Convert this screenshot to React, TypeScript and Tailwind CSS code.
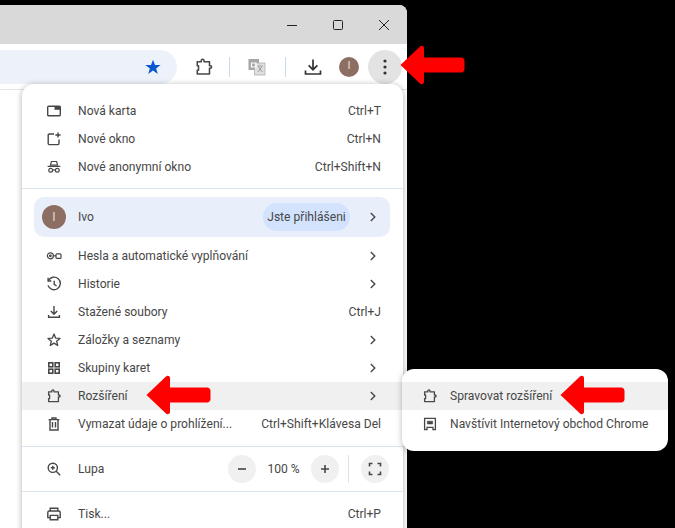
import React from "react";

const c = "#474747";

function Ext({ size = 16, color = c, sw = 1.3 }: { size?: number; color?: string; sw?: number }) {
  return (
    <svg width={size} height={size} viewBox="0 0 16 16" fill="none" stroke={color} strokeWidth={sw} strokeLinejoin="round">
      <path d="M2.6 3.8H5.8V2.9C5.8 2.3 6.3 1.8 6.9 1.8C7.5 1.8 8 2.3 8 2.9V3.8H12.4V7H13.1C13.7 7 14.1 7.5 14.1 8C14.1 8.5 13.7 9 13.1 9H12.4V13.6H2.6V10.6H3.6V7H2.6Z" />
    </svg>
  );
}

const Icons: Record<string, React.ReactNode> = {
  tab: (
    <svg width="16" height="16" viewBox="0 0 16 16" fill="none">
      <rect x="1.7" y="3.2" width="12.6" height="9.6" rx="1" stroke={c} strokeWidth="1.4" />
      <rect x="8.5" y="3.2" width="5.8" height="3.6" fill={c} />
    </svg>
  ),
  win: (
    <svg width="16" height="16" viewBox="0 0 16 16" fill="none" stroke={c} strokeWidth="1.4">
      <path d="M8 3H3.2C2.6 3 2.2 3.4 2.2 4V12.6C2.2 13.2 2.6 13.6 3.2 13.6H12C12.6 13.6 13 13.2 13 12.6V8.5" />
      <path d="M12 1.4V6.6M9.4 4H14.6" />
    </svg>
  ),
  incog: (
    <svg width="16" height="16" viewBox="0 0 16 16" fill="none" stroke={c} strokeWidth="1.2">
      <path d="M5.4 2.5H10.6L11.6 6.2H4.4Z" />
      <path d="M1.6 7.4H14.4" />
      <circle cx="4.7" cy="11.3" r="1.9" />
      <circle cx="11.3" cy="11.3" r="1.9" />
      <path d="M6.6 11H9.4" />
    </svg>
  ),
  key: (
    <svg width="16" height="16" viewBox="0 0 16 16" fill="none" stroke={c} strokeWidth="1.2">
      <circle cx="4.4" cy="7.8" r="3" />
      <circle cx="4.4" cy="7.8" r="0.8" fill={c} />
      <path d="M7.4 7.8H10" />
      <rect x="10" y="5.8" width="5" height="4.6" rx="1" />
    </svg>
  ),
  hist: (
    <svg width="16" height="16" viewBox="0 0 16 16" fill="none" stroke={c} strokeWidth="1.4">
      <path d="M2.4 4.6A6.3 6.3 0 1 1 2 9.4" />
      <path d="M2.1 1.8V5H5.3" />
      <path d="M8.2 4.8V8.4L10.6 10" />
    </svg>
  ),
  dl: (
    <svg width="16" height="16" viewBox="0 0 16 16" fill="none" stroke={c} strokeWidth="1.4">
      <path d="M8 2V10M4.8 7L8 10.2L11.2 7" />
      <path d="M2.6 11V13.2H13.4V11" />
    </svg>
  ),
  star: (
    <svg width="16" height="16" viewBox="0 0 16 16" fill="none" stroke={c} strokeWidth="1.3" strokeLinejoin="round">
      <path d="M8 2L9.6 6.1L14 6.4L10.6 9.2L11.7 13.5L8 11.1L4.3 13.5L5.4 9.2L2 6.4L6.4 6.1Z" />
    </svg>
  ),
  grid: (
    <svg width="16" height="16" viewBox="0 0 16 16" fill="none" stroke={c} strokeWidth="1.6">
      <rect x="2.8" y="2.8" width="4" height="4" />
      <rect x="9.2" y="2.8" width="4" height="4" />
      <rect x="2.8" y="9.2" width="4" height="4" />
      <rect x="9.2" y="9.2" width="4" height="4" />
    </svg>
  ),
  ext: <Ext />,
  trash: (
    <svg width="16" height="16" viewBox="0 0 16 16" fill="none" stroke={c} strokeWidth="1.4">
      <path d="M2.6 3.6H13.4M6 3.4V2H10V3.4" />
      <path d="M4 3.6V14H12V3.6" />
      <path d="M6.5 6V11.6M9.5 6V11.6" />
    </svg>
  ),
  zoom: (
    <svg width="16" height="16" viewBox="0 0 16 16" fill="none" stroke={c} strokeWidth="1.4">
      <circle cx="6.8" cy="6.8" r="4.6" />
      <path d="M10.2 10.2L14.2 14.2M6.8 4.8V8.8M4.8 6.8H8.8" />
    </svg>
  ),
  print: (
    <svg width="16" height="16" viewBox="0 0 16 16" fill="none" stroke={c} strokeWidth="1.4">
      <path d="M4.2 5V2.2H11.8V5" />
      <path d="M4.2 11.6H1.8V6.6C1.8 5.6 2.4 5 3.4 5H12.6C13.6 5 14.2 5.6 14.2 6.6V11.6H11.8" />
      <path d="M4.2 9.4H11.8V13.8H4.2Z" />
    </svg>
  ),
  store: (
    <svg width="16" height="16" viewBox="0 0 16 16" fill="none" stroke={c} strokeWidth="1.3">
      <path d="M2.6 2.4H13.4V13.6H11V11.4H5V13.6H2.6Z" />
      <path d="M5.4 5.2H10.6V8H5.4Z" fill={c} strokeWidth="0.6" />
    </svg>
  ),
};

function Chevron() {
  return (
    <svg width="16" height="16" viewBox="0 0 16 16" fill="none" stroke={c} strokeWidth="1.4">
      <path d="M5.8 4L9.8 8L5.8 12" />
    </svg>
  );
}

function Arrow({ className }: { className: string }) {
  return (
    <svg className={className} width="65" height="40" viewBox="0 0 65 40" fill="#ff0000">
      <path d="M0.5 20L20 1.5C21.5 0 24 1 24 3V12.5H61C63 12.5 64.5 14 64.5 16V24C64.5 26 63 27.5 61 27.5H24V37C24 39 21.5 40 20 38.5Z" />
    </svg>
  );
}

function Row({ icon, label, right, chevron, hover }: { icon: string; label: string; right?: string; chevron?: boolean; hover?: boolean }) {
  return (
    <div className={`flex h-7 items-center pl-6 pr-[22px] ${hover ? "bg-[#f0f0f0]" : ""}`}>
      <span className="flex w-8 shrink-0">{Icons[icon]}</span>
      <span className="flex-1 whitespace-nowrap">{label}</span>
      {right && <span className="whitespace-nowrap">{right}</span>}
      {chevron && <Chevron />}
    </div>
  );
}

function Sep({ className }: { className: string }) {
  return <div className={`h-px bg-[#dbe4ee] ${className}`} />;
}

export default function App() {
  return (
    <div className="relative h-[528px] w-[675px] overflow-hidden bg-black text-[12.1px] text-[#474747] [font-family:Roboto,sans-serif]">
      <div className="absolute left-0 top-[5px] flex h-[523px] w-[407px] flex-col overflow-hidden rounded-tr-lg bg-white">
        <div className="flex h-[39px] shrink-0 justify-end bg-[#d9d9d9] text-[#222]">
          <div className="flex w-[46px] items-center justify-center">
            <svg width="12" height="12" viewBox="0 0 12 12" stroke="#222" strokeWidth="1"><path d="M1 6.5H11" /></svg>
          </div>
          <div className="flex w-[46px] items-center justify-center">
            <svg width="12" height="12" viewBox="0 0 12 12" fill="none" stroke="#222" strokeWidth="1"><rect x="1.5" y="1.5" width="9" height="9" rx="1" /></svg>
          </div>
          <div className="flex w-[46px] items-center justify-center">
            <svg width="12" height="12" viewBox="0 0 12 12" stroke="#222" strokeWidth="1"><path d="M1 1L11 11M11 1L1 11" /></svg>
          </div>
        </div>
        <div className="flex h-[46px] shrink-0 items-center border-b border-[#e3e3e3] bg-white">
          <div className="flex h-[34px] w-[177px] shrink-0 items-center justify-end rounded-r-full bg-[#edf2fa] pr-4">
            <svg width="16" height="16" viewBox="0 0 16 16" fill="#0b57d0"><path d="M8 .8L10 6H15.6L11.1 9.4L12.8 15L8 11.6L3.2 15L4.9 9.4L.4 6H6Z" /></svg>
          </div>
          <div className="ml-[17px] flex w-5"><Ext size={20} sw={1.25} /></div>
          <div className="ml-[15px] h-5 w-px bg-[#c7d9ea]" />
          <svg className="ml-[18px]" width="18" height="18" viewBox="0 0 18 18">
            <rect x="0.5" y="1" width="10.5" height="11" fill="#a6a6a6" />
            <rect x="6.5" y="5" width="10.5" height="12" fill="#e0e0e0" stroke="#b0b0b0" strokeWidth="0.8" />
            <path d="M3.5 5H8V9H3.5Z" fill="none" stroke="#fff" strokeWidth="1.2" />
            <path d="M9.5 8H14.5M10 14L14 8.5M10.5 9L14.5 14" fill="none" stroke="#999" strokeWidth="1" />
          </svg>
          <div className="ml-[19px] h-5 w-px bg-[#c7d9ea]" />
          <svg className="ml-[18px]" width="18" height="18" viewBox="0 0 18 18" fill="none" stroke="#333" strokeWidth="1.7">
            <path d="M9 1.5V11.5M4.6 7.4L9 11.7L13.4 7.4" />
            <path d="M1.5 12.5V16H16.5V12.5" />
          </svg>
          <div className="ml-[17px] flex h-5 w-5 items-center justify-center rounded-full bg-[#8d6e63] text-[11px] text-[#e8dcd6]">I</div>
          <div className="ml-[9px] flex h-[34px] w-[34px] items-center justify-center rounded-full bg-[#e3e3e3]">
            <svg width="4" height="16" viewBox="0 0 4 16" fill="#333"><circle cx="2" cy="2" r="1.6" /><circle cx="2" cy="8" r="1.6" /><circle cx="2" cy="14" r="1.6" /></svg>
          </div>
        </div>
      </div>

      <div className="absolute left-[22px] top-[84px] h-[460px] w-[381px] rounded-xl bg-white pt-[13px] shadow-[0_1px_6px_rgba(0,0,0,0.32)]">
        <Row icon="tab" label="Nová karta" right="Ctrl+T" />
        <Row icon="win" label="Nové okno" right="Ctrl+N" />
        <Row icon="incog" label="Nové anonymní okno" right="Ctrl+Shift+N" />
        <Sep className="mt-[7px]" />
        <div className="ml-3 mr-[13px] mt-2 flex h-10 items-center rounded-[10px] bg-[#e8eefa] pl-2 pr-[9px]">
          <div className="flex h-6 w-6 items-center justify-center rounded-full bg-[#8d6e63] text-[12px] text-[#e8dcd6]">I</div>
          <span className="ml-3 flex-1">Ivo</span>
          <span className="flex h-7 w-[87px] items-center justify-center rounded-full bg-[#d3e3fd]">Jste přihlášeni</span>
          <span className="ml-[15px] flex"><Chevron /></span>
        </div>
        <div className="mt-[5px]">
          <Row icon="key" label="Hesla a automatické vyplňování" chevron />
          <Row icon="hist" label="Historie" chevron />
          <Row icon="dl" label="Stažené soubory" right="Ctrl+J" />
          <Row icon="star" label="Záložky a seznamy" chevron />
          <Row icon="grid" label="Skupiny karet" chevron />
          <Row icon="ext" label="Rozšíření" chevron hover />
          <Row icon="trash" label="Vymazat údaje o prohlížení..." right="Ctrl+Shift+Klávesa Del" />
        </div>
        <Sep className="mt-2" />
        <div className="flex h-11 items-center pl-6 pr-[14px]">
          <span className="flex w-8 shrink-0">{Icons.zoom}</span>
          <span className="flex-1">Lupa</span>
          <button className="flex h-7 w-7 items-center justify-center rounded-full bg-[#f0f0f0]">
            <svg width="12" height="12" viewBox="0 0 12 12" stroke={c} strokeWidth="1.6"><path d="M2 6H10" /></svg>
          </button>
          <span className="w-[55px] text-center">100 %</span>
          <button className="flex h-7 w-7 items-center justify-center rounded-full bg-[#f0f0f0]">
            <svg width="12" height="12" viewBox="0 0 12 12" stroke={c} strokeWidth="1.6"><path d="M2 6H10M6 2V10" /></svg>
          </button>
          <div className="ml-[9px] h-7 w-px bg-[#dbe4ee]" />
          <button className="ml-[12px] flex h-7 w-7 items-center justify-center rounded-full bg-[#f0f0f0]">
            <svg width="14" height="14" viewBox="0 0 14 14" fill="none" stroke={c} strokeWidth="1.6"><path d="M1.5 4.5V1.5H4.5M9.5 1.5H12.5V4.5M12.5 9.5V12.5H9.5M4.5 12.5H1.5V9.5" /></svg>
          </button>
        </div>
        <Sep className="" />
        <div className="mt-2"><Row icon="print" label="Tisk..." right="Ctrl+P" /></div>
      </div>

      <div className="absolute left-[402px] top-[369px] w-[266px] rounded-xl bg-white py-[13px] shadow-[0_1px_6px_rgba(0,0,0,0.28)]">
        <div className="flex h-7 items-center bg-[#f0f0f0] pl-5">
          <span className="flex w-7 shrink-0">{Icons.ext}</span>
          <span className="whitespace-nowrap">Spravovat rozšíření</span>
        </div>
        <div className="flex h-7 items-center pl-5">
          <span className="flex w-7 shrink-0">{Icons.store}</span>
          <span className="whitespace-nowrap">Navštívit Internetový obchod Chrome</span>
        </div>
      </div>

      <Arrow className="absolute left-[400px] top-[45px]" />
      <Arrow className="absolute left-[146px] top-[375px]" />
      <Arrow className="absolute left-[560px] top-[375px]" />
    </div>
  );
}
